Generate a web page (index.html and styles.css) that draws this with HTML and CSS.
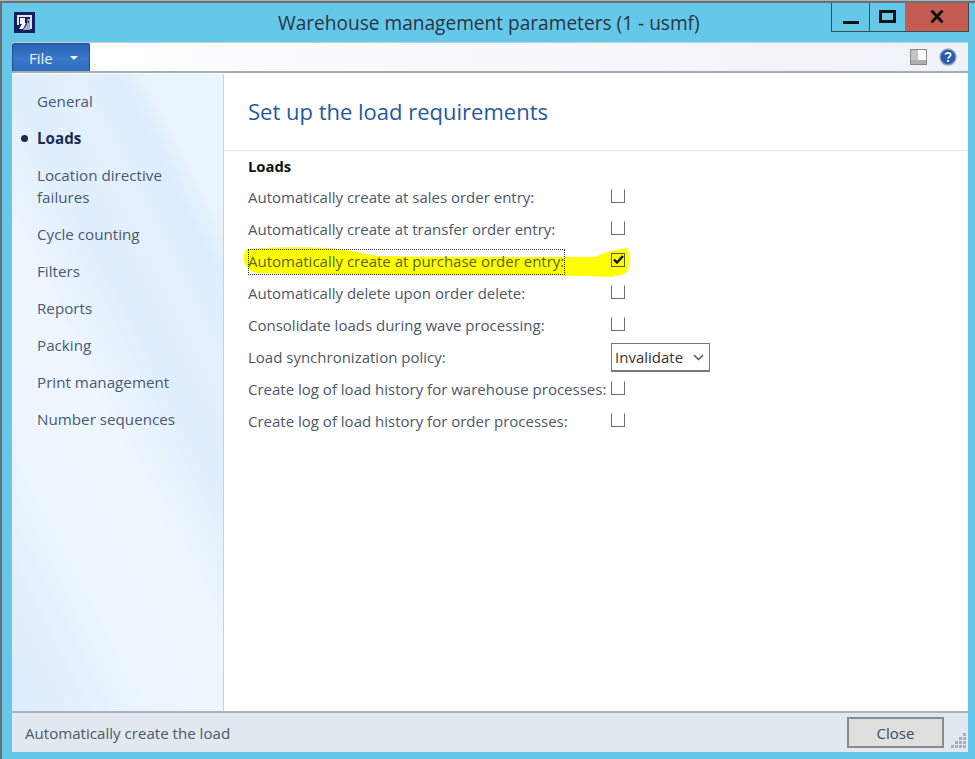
FILE: index.html
```html
<!DOCTYPE html>
<html lang="en">
<head>
<meta charset="utf-8">
<title>Warehouse management parameters</title>
<link rel="stylesheet" href="styles.css">
</head>
<body>
<div class="window">
  <header class="titlebar">
    <svg class="app-icon" width="21" height="21" viewBox="0 0 21 21">
      <rect width="21" height="21" fill="#14205e"/>
      <path d="M3 3h15v14h-2V5H5v8H3z" fill="#dfe4f0"/>
      <path d="M6 6h5v5h1L9 17H5l3-5H6z" fill="#f6f8fc"/>
      <path d="M13 7h3v11H9l4-6z" fill="#9fadcc"/>
      <path d="M13.500 8.500H15V11h-1.500z" fill="#2a3a78"/>
    </svg>
    <h1 class="title">Warehouse management parameters (1 - usmf)</h1>
    <div class="caption-buttons">
      <div class="cap cap-min"><span class="min-glyph"></span></div>
      <div class="cap cap-max"><span class="max-glyph"></span></div>
      <div class="cap cap-close">
        <svg width="14" height="13" viewBox="0 0 14 13"><path d="M1.500 0.500 12.500 12.500M12.500 0.500 1.500 12.500" stroke="#111" stroke-width="3" fill="none"/></svg>
      </div>
    </div>
  </header>
  <div class="client">
    <div class="toolbar">
      <div class="file-tab"><span>File</span><span class="file-arrow"></span></div>
      <div class="toolbar-icons">
        <svg width="17" height="16" viewBox="0 0 17 16">
          <rect x="0.500" y="0.500" width="16" height="15" fill="#fafafa" stroke="#8a8a8a"/>
          <rect x="1" y="1" width="7" height="14" fill="#c2c2c2"/>
          <rect x="1" y="11" width="15" height="4" fill="#b0b0b0"/>
        </svg>
        <svg width="18" height="18" viewBox="0 0 18 18">
          <circle cx="9" cy="9" r="8" fill="#2a5cb0" stroke="#9aa4b4" stroke-width="1.400"/>
          <path d="M6.400 6.600C6.600 4.400 11.600 4.200 11.700 6.900 11.800 8.700 9.200 8.800 9.100 10.600" stroke="#fff" stroke-width="1.800" fill="none"/>
          <rect x="8.100" y="12" width="2" height="2" fill="#fff"/>
        </svg>
      </div>
    </div>
    <div class="main">
      <nav class="nav">
        <a class="nav-item">General</a>
        <a class="nav-item nav-active">Loads</a>
        <a class="nav-item">Location directive failures</a>
        <a class="nav-item">Cycle counting</a>
        <a class="nav-item">Filters</a>
        <a class="nav-item">Reports</a>
        <a class="nav-item">Packing</a>
        <a class="nav-item">Print management</a>
        <a class="nav-item">Number sequences</a>
      </nav>
      <section class="content">
        <h2 class="heading">Set up the load requirements</h2>
        <div class="form">
          <h3 class="group">Loads</h3>
          <div class="row"><span class="label">Automatically create at sales order entry:</span><span class="check"></span></div>
          <div class="row"><span class="label">Automatically create at transfer order entry:</span><span class="check"></span></div>
          <div class="row">
            <svg class="highlight" width="390" height="36" viewBox="0 0 390 36">
              <path d="M4 4C30 2 60 2 85 3 105 4 118 9 135 11 210 12 290 12 352 12 362 7 372 5 384 3 388 10 387 22 383 28 372 33 362 32 345 31 260 30 180 31 110 30 70 29 40 29 14 28 3 26-1 16 1 9 2 6 3 5 4 4Z" fill="#ffff00"/>
            </svg>
            <span class="label label-focus">Automatically create at purchase order entry:</span>
            <span class="check check-on">
              <svg width="11" height="9" viewBox="0 0 11 9"><path d="M1 4.500 4 7.500 10 1" stroke="#111" stroke-width="2.400" fill="none"/></svg>
            </span>
          </div>
          <div class="row"><span class="label">Automatically delete upon order delete:</span><span class="check"></span></div>
          <div class="row"><span class="label">Consolidate loads during wave processing:</span><span class="check"></span></div>
          <div class="row row-select"><span class="label">Load synchronization policy:</span>
            <span class="select">Invalidate
              <svg width="11" height="7" viewBox="0 0 11 7"><path d="M1 1 5.500 5.500 10 1" stroke="#555" stroke-width="1.500" fill="none"/></svg>
            </span>
          </div>
          <div class="row"><span class="label">Create log of load history for warehouse processes:</span><span class="check"></span></div>
          <div class="row"><span class="label">Create log of load history for order processes:</span><span class="check"></span></div>
        </div>
      </section>
    </div>
    <footer class="status">
      <span class="status-text">Automatically create the load</span>
      <button class="close-btn">Close</button>
      <svg class="grip" width="15" height="15" viewBox="0 0 15 15" fill="#aab0b8">
        <rect x="12" y="0" width="3" height="3"/>
        <rect x="12" y="4" width="3" height="3"/><rect x="8" y="4" width="3" height="3"/>
        <rect x="12" y="8" width="3" height="3"/><rect x="8" y="8" width="3" height="3"/><rect x="4" y="8" width="3" height="3"/>
        <rect x="12" y="12" width="3" height="3"/><rect x="8" y="12" width="3" height="3"/><rect x="4" y="12" width="3" height="3"/><rect x="0" y="12" width="3" height="3"/>
      </svg>
    </footer>
  </div>
</div>
</body>
</html>
```
FILE: styles.css
```css
* { box-sizing: border-box; }
html, body { margin: 0; padding: 0; }
body {
  width: 975px;
  height: 759px;
  overflow: hidden;
  background: #fff;
  font-family: "Open Sans", "Noto Sans", sans-serif;
  color: #4d5768;
}
.window {
  width: 975px;
  height: 759px;
  padding: 2px 0 0 2px;
  background: #65c8e9;
  border-top: 1px solid #a9b4ba;
  display: flex;
  flex-direction: column;
  box-shadow: inset 2px 2px 0 #6b6f72;
}
.titlebar {
  height: 39px;
  flex: none;
  display: flex;
  position: relative;
  align-items: flex-start;
}
.app-icon { margin: 9px 0 0 12px; flex: none; }
.title {
  margin: 6px 0 0 243px;
  font-size: 19.1px;
  font-weight: 400;
  color: #2b3442;
  line-height: 28px;
  white-space: nowrap;
}
.caption-buttons {
  position: absolute;
  top: 0;
  right: 6px;
  display: flex;
  height: 29px;
  border: 1px solid #3f4a50;
  border-top: 0;
}
.cap { display: flex; align-items: center; justify-content: center; height: 100%; }
.cap-min { width: 38px; border-right: 1px solid #3f4a50; }
.cap-max { width: 35px; }
.cap-close { width: 63px; background: #c45a50; }
.min-glyph { width: 16px; height: 3px; background: #111; margin-top: 10px; }
.max-glyph { width: 17px; height: 13px; border: 3px solid #111; margin-top: -2px; }
.cap-close svg { margin-top: -2px; }
.client {
  margin: 0 7px 7px 10px;
  flex: 1;
  display: flex;
  flex-direction: column;
  min-height: 0;
  background: #fff;
}
.toolbar {
  height: 31px;
  flex: none;
  display: flex;
  justify-content: space-between;
  align-items: flex-start;
  background: linear-gradient(90deg, #fff 0%, #f6f9fc 50%, #eef3f9 100%);
  border-top: 1px solid #c5cfd6;
  border-bottom: 2px solid #a6acb2;
}
.file-tab {
  width: 78px;
  height: 28px;
  background: linear-gradient(180deg, #2862b4 0%, #3a78c8 55%, #2f6cc0 100%);
  border: 1px solid #1f4f99;
  border-bottom: 0;
  border-radius: 2px 2px 0 0;
  color: #e8f1fb;
  font-size: 15px;
  display: flex;
  align-items: center;
  padding: 0 0 0 16px;
  gap: 17px;
}
.file-arrow {
  width: 0;
  height: 0;
  border-left: 4px solid transparent;
  border-right: 4px solid transparent;
  border-top: 4px solid #f4f8fc;
}
.toolbar-icons { display: flex; align-items: center; gap: 12px; padding: 5px 11px 0 0; }
.main { flex: 1; display: flex; min-height: 0; margin-top: 1px; }
.nav {
  width: 212px;
  flex: none;
  display: flex;
  flex-direction: column;
  padding: 16px 34px 0 25px;
  border-right: 1px solid #c3d3e6;
  background: linear-gradient(63deg,
    #dcecfb 0,
    #e6f2fd 90px,
    #edf6fe 130px,
    #eef6fe 220px,
    #dfeefc 290px,
    #e4f1fd 340px,
    #dcedfc 380px,
    #e9f4fe 410px,
    #eaf4fd 476px);
}
.nav-item {
  font-size: 15.2px;
  line-height: 22px;
  color: #4a5874;
  margin-bottom: 15px;
  position: relative;
}
.nav-active { color: #1b2a56; font-weight: 700; }
.nav-active::before {
  content: "";
  position: absolute;
  left: -16px;
  top: 8px;
  width: 7px;
  height: 7px;
  border-radius: 50%;
  background: #1b2a56;
}
.content { flex: 1; min-width: 0; }
.heading {
  margin: 0;
  height: 77px;
  padding: 22px 0 0 24px;
  font-size: 22px;
  line-height: 30px;
  font-weight: 400;
  color: #1f5aa0;
  border-bottom: 1px solid #dde4ea;
}
.form { padding: 4px 0 0 24px; }
.group {
  margin: 0 0 5px;
  font-size: 14.8px;
  line-height: 22px;
  font-weight: 700;
  color: #111;
}
.row {
  height: 32px;
  display: flex;
  align-items: center;
  position: relative;
}
.label { width: 363px; font-size: 15px; line-height: 20px; white-space: nowrap; color: #4d5768; position: relative; flex: none; top: -1px; }
.label-focus { color: #5a6420; }
.label-focus::after {
  content: "";
  position: absolute;
  left: 0;
  top: -2px;
  width: 315px;
  height: 24px;
  border: 1px dotted #333;
}
.highlight { position: absolute; left: -5px; top: -1px; }
.check {
  width: 14px;
  height: 14px;
  margin: -5px 0 0 0;
  border: 1px solid #6d6d78;
  border-top-color: transparent;
  position: relative;
  display: flex;
  align-items: center;
  justify-content: center;
}
.check-on { border-color: #555; }
.row-select .label { margin-top: -1px; }
.select {
  margin: -1px 0 0 0;
  width: 99px;
  height: 29px;
  border: 1px solid #777;
  border-bottom-width: 2px;
  color: #333;
  font-size: 15px;
  display: flex;
  align-items: center;
  justify-content: space-between;
  padding: 0 5px 0 3px;
  background: #fff;
}
.status {
  height: 41px;
  flex: none;
  display: flex;
  align-items: center;
  background: #e1e8ef;
  border-top: 2px solid #a9b3bd;
  padding-left: 13px;
  position: relative;
}
.status-text { font-size: 15.1px; color: #4d5768; flex: 1; }
.close-btn {
  width: 97px;
  height: 31px;
  margin-right: 24px;
  border: 2px solid #8b8b8b;
  background: #dfdfdd;
  color: #3b4c66;
  font: 15px "Open Sans", "Noto Sans", sans-serif;
}
.grip { position: absolute; right: 2px; bottom: 4px; }
```
